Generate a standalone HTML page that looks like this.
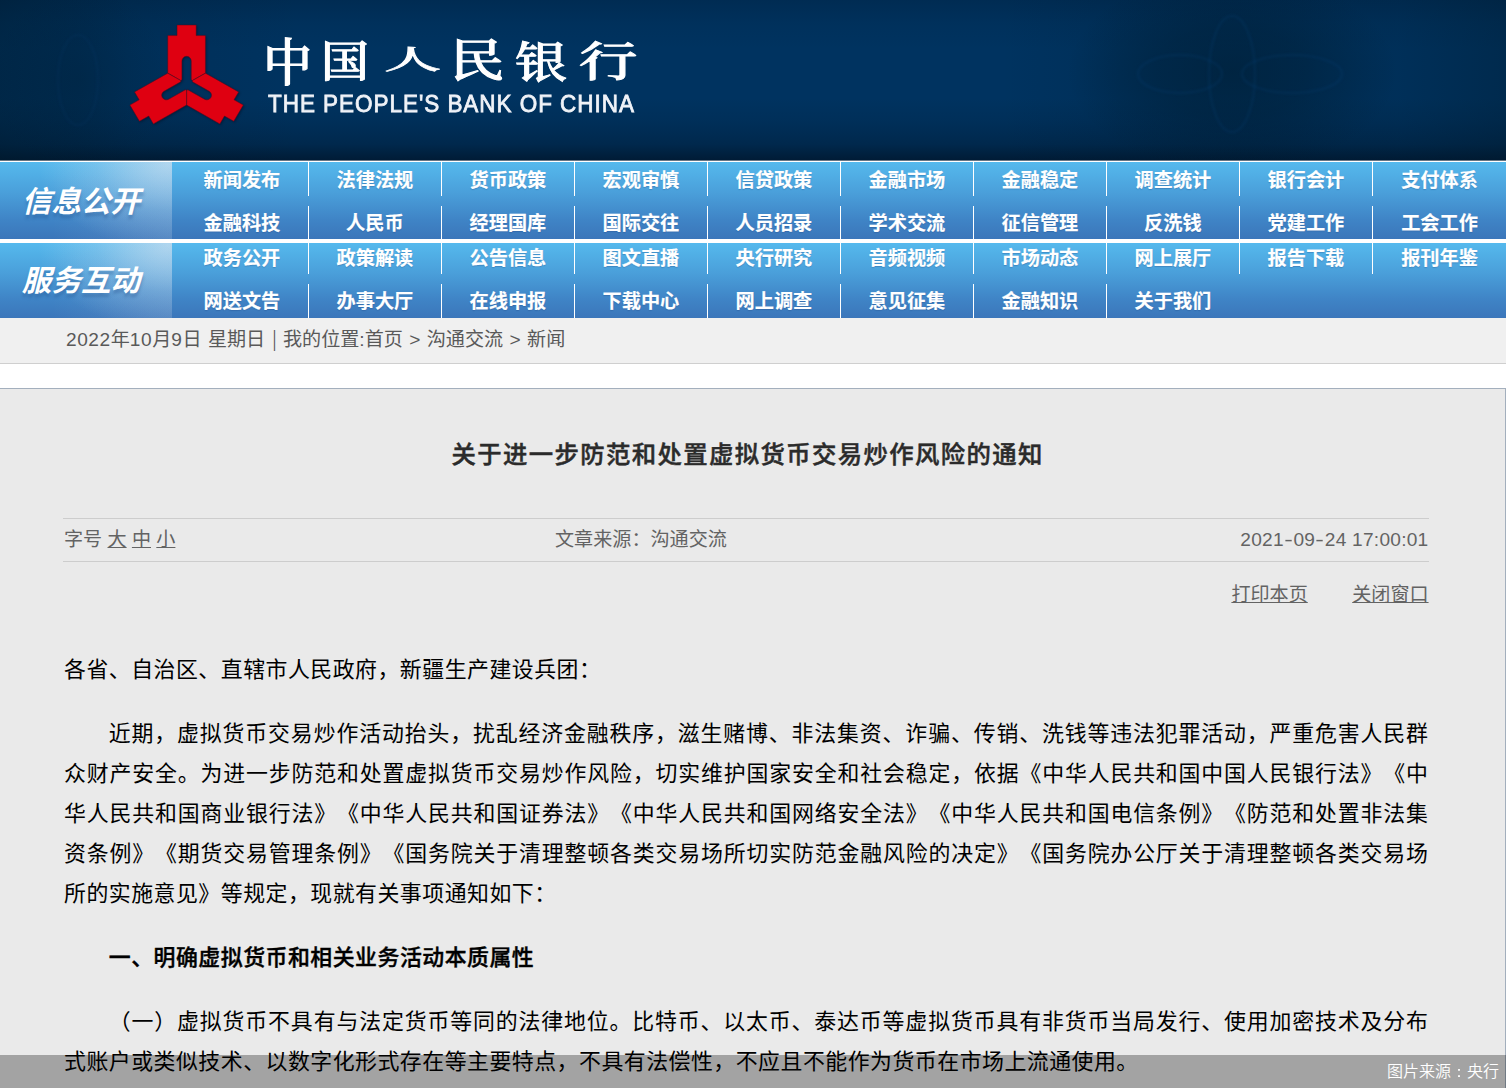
<!DOCTYPE html>
<html lang="zh-CN">
<head>
<meta charset="utf-8">
<title>关于进一步防范和处置虚拟货币交易炒作风险的通知</title>
<style>
*{margin:0;padding:0;box-sizing:border-box;text-spacing-trim:space-all}
html,body{width:1506px;height:1088px;overflow:hidden;background:#fff}
body{position:relative;font-family:"Liberation Sans","Noto Sans CJK SC",sans-serif;color:#000}
a{color:inherit;text-decoration:none}
.abs{position:absolute}
/* header */
#hd{position:absolute;left:0;top:0;width:1506px;height:161px;background:#003360;overflow:hidden}
#hd:after{content:"";position:absolute;left:0;top:160px;width:100%;height:1px;background:rgba(255,255,255,.4)}
#hd .g1{position:absolute;inset:0;background:
 radial-gradient(ellipse 165px 100px at 1232px 72px, rgba(0,22,36,.45) 0%, rgba(0,22,36,.32) 45%, rgba(0,22,36,0) 100%),
 radial-gradient(ellipse 90px 95px at 80px 80px, rgba(0,22,36,.2) 0%, rgba(0,22,36,0) 100%),
 linear-gradient(to right, rgba(0,22,36,.4) 0px, rgba(0,22,36,.13) 130px, rgba(0,22,36,0) 300px, rgba(0,22,36,0) 1000px, rgba(0,22,36,.1) 1120px, rgba(0,22,36,.12) 1400px, rgba(0,22,36,.3) 1506px),
 linear-gradient(to bottom, rgba(0,14,30,.2) 0px, rgba(0,14,30,.06) 25px, rgba(0,0,0,0) 50px, rgba(0,0,0,0) 98px, rgba(0,12,26,.1) 122px, rgba(0,12,26,.27) 144px, rgba(0,12,26,.62) 161px)}
#logo{position:absolute;left:0;top:0;width:1506px;height:161px}
#cn{position:absolute;left:0;top:0;width:700px;height:120px;color:#fff;font-family:"Liberation Serif","Noto Serif CJK SC",serif;font-weight:500;font-size:44px;line-height:44px;white-space:nowrap;filter:blur(.5px)}
#cn span{position:absolute;transform-origin:0 0;-webkit-text-stroke:1px #fff}
#en{position:absolute;left:268px;top:89.2px;color:#f0f3f8;font-family:"Liberation Sans",sans-serif;font-size:24.2px;line-height:30px;white-space:nowrap;letter-spacing:1.04px;-webkit-text-stroke:.8px #f0f3f8;filter:blur(.5px);transform:scaleX(.93);transform-origin:0 0}
/* nav */
.nav{position:absolute;left:0;width:1506px;background:linear-gradient(to bottom,#55b9ed 0%,#4a9fda 40%,#3f84c6 75%,#3b76ba 100%)}
#nav1{top:162px;height:77px}
#nav2{top:243px;height:75px}
.lab{position:absolute;left:0;top:0;width:172px;height:100%;background:linear-gradient(to right,rgba(225,230,240,0) 30%,rgba(225,230,240,.13) 100%),radial-gradient(ellipse 130px 85px at 168px 2px,rgba(225,230,240,.6) 0%,rgba(225,230,240,.42) 25%,rgba(225,230,240,.2) 55%,rgba(225,230,240,0) 100%)}
.lab span{position:absolute;left:-5px;width:172px;text-shadow:0 4px 3px rgba(30,70,130,.3);text-align:center;color:#fff;font-weight:bold;font-style:italic;font-size:29.6px;line-height:40px;white-space:nowrap}
.it{position:absolute;width:133px;text-align:center;color:#fff;font-weight:bold;font-size:19.2px;-webkit-text-stroke:.15px #fff;white-space:nowrap;text-shadow:0 1px 1px rgba(30,70,130,.3)}
.dv{position:absolute;width:1px;background:#fff}
/* breadcrumb */
#bc{position:absolute;left:0;top:318px;width:1506px;height:46px;background:#f0f0f0;border-bottom:1px solid #cfcfcf}
#bc p{position:absolute;left:66px;top:7.6px;font-size:19.1px;line-height:28px;color:#595959;white-space:nowrap;word-spacing:1.1px}
#bc b{font-weight:normal;letter-spacing:.55px}
#bc i{font-style:normal;display:inline-block;transform:scale(.7,1.13) translateY(-1px)}
/* article */
#art{position:absolute;left:-1px;top:388px;width:1507px;height:720px;background:#eaeaea;border:1px solid #a3afbd}
#ttl{position:absolute;left:1.6px;top:437px;width:1492px;text-align:center;font-weight:500;-webkit-text-stroke:.45px #2b2b2b;font-size:24.4px;letter-spacing:1.36px;line-height:36px;color:#2b2b2b;white-space:nowrap}
.hr{position:absolute;left:63px;width:1366px;height:1px;background:#cdcdcd}
.meta{position:absolute;font-size:19.1px;line-height:28px;color:#636363;white-space:nowrap;margin-top:.7px}
.meta b{display:inline-block;font-weight:normal;width:9.6px;text-align:center;transform:scaleX(1.35)}
.meta u{text-decoration:underline;text-underline-offset:.8px;text-decoration-thickness:1px}
.ln{position:absolute;left:64px;width:1364.5px;font-size:21.9px;letter-spacing:.5px;line-height:40px;height:40px;white-space:nowrap;text-align:justify;text-align-last:justify;color:#000}
.ln.l{text-align:left;text-align-last:left}
.ln.i{left:108.8px;width:1319.7px}
.ln.b{font-weight:500;-webkit-text-stroke:.4px #000}
#cap{position:absolute;left:0;top:1055px;width:1506px;height:33px;background:rgba(0,0,0,.3)}
#cap span{position:absolute;right:7px;top:3px;color:#fff;font-weight:350;font-size:16px;line-height:28px;white-space:nowrap}
#cap i{font-style:normal;font-family:"Liberation Sans","WenQuanYi Zen Hei",sans-serif}
</style>
</head>
<body>
<div id="hd">
  <div class="g1"></div>
  <svg id="logo" width="1506" height="161" viewBox="0 0 1506 161">
    <g transform="translate(186.6,83.8) scale(0.975,0.955)" fill="#df0011" stroke="#5a0a1e" stroke-width="0.5" style="filter:blur(.45px) drop-shadow(1px 1px 1px rgba(0,10,30,.45))">
      <path d="M-9.8,-61.5 H9.8 V-50.5 H19.3 V-11.2 L6,-3.5 L4.8,-4.2 V-24 A4.8,4.8 0 0 0 -4.8,-24 V-4.2 L-6,-3.5 L-19.3,-11.2 V-50.5 H-9.8 Z"/>
      <path transform="rotate(120)" d="M-9.8,-61.5 H9.8 V-50.5 H19.3 V-11.2 L6,-3.5 L4.8,-4.2 V-24 A4.8,4.8 0 0 0 -4.8,-24 V-4.2 L-6,-3.5 L-19.3,-11.2 V-50.5 H-9.8 Z"/>
      <path transform="rotate(240)" d="M-9.8,-61.5 H9.8 V-50.5 H19.3 V-11.2 L6,-3.5 L4.8,-4.2 V-24 A4.8,4.8 0 0 0 -4.8,-24 V-4.2 L-6,-3.5 L-19.3,-11.2 V-50.5 H-9.8 Z"/>
    </g>
  </svg>
  <svg class="abs" style="left:0;top:0;filter:blur(1.2px)" width="1506" height="161" viewBox="0 0 1506 161" fill="none" stroke="#0a4a8c" stroke-opacity=".13" stroke-width="3">
    <ellipse cx="1232" cy="74" rx="23" ry="58"/><ellipse cx="1180" cy="74" rx="42" ry="19"/><ellipse cx="1292" cy="74" rx="50" ry="19"/>
    <ellipse cx="78" cy="80" rx="20" ry="45" stroke-opacity=".08"/>
  </svg>
  <div id="cn"><span style="left:262.5px;top:39.7px;transform:scale(1.118,1.151)">中</span><span style="left:321.2px;top:41.1px;transform:scale(1.090,0.991)">国</span><span style="left:383.8px;top:48.0px;transform:scale(1.299,0.595)">人</span><span style="left:450.1px;top:40.0px;transform:scale(1.238,1.037)">民</span><span style="left:514.6px;top:42.0px;transform:scale(1.183,0.987)">银</span><span style="left:579.4px;top:41.9px;transform:scale(1.328,0.942)">行</span></div>
  <div id="en">THE PEOPLE'S BANK OF CHINA</div>
</div>
<div class="nav" id="nav1"><div class="lab"><span style="top:20px">信息公开</span></div></div>
<div class="nav" id="nav2"><div class="lab"><span style="top:17.5px">服务互动</span></div></div>
<div id="navitems">
<a class="it" style="left:175.4px;top:166.8px;line-height:28px">新闻发布</a>
<a class="it" style="left:308.4px;top:166.8px;line-height:28px">法律法规</a>
<a class="it" style="left:441.4px;top:166.8px;line-height:28px">货币政策</a>
<a class="it" style="left:574.4px;top:166.8px;line-height:28px">宏观审慎</a>
<a class="it" style="left:707.4px;top:166.8px;line-height:28px">信贷政策</a>
<a class="it" style="left:840.4px;top:166.8px;line-height:28px">金融市场</a>
<a class="it" style="left:973.4px;top:166.8px;line-height:28px">金融稳定</a>
<a class="it" style="left:1106.4px;top:166.8px;line-height:28px">调查统计</a>
<a class="it" style="left:1239.4px;top:166.8px;line-height:28px">银行会计</a>
<a class="it" style="left:1373.0px;top:166.8px;line-height:28px">支付体系</a>
<a class="it" style="left:175.4px;top:209.8px;line-height:28px">金融科技</a>
<a class="it" style="left:308.4px;top:209.8px;line-height:28px">人民币</a>
<a class="it" style="left:441.4px;top:209.8px;line-height:28px">经理国库</a>
<a class="it" style="left:574.4px;top:209.8px;line-height:28px">国际交往</a>
<a class="it" style="left:707.4px;top:209.8px;line-height:28px">人员招录</a>
<a class="it" style="left:840.4px;top:209.8px;line-height:28px">学术交流</a>
<a class="it" style="left:973.4px;top:209.8px;line-height:28px">征信管理</a>
<a class="it" style="left:1106.4px;top:209.8px;line-height:28px">反洗钱</a>
<a class="it" style="left:1239.4px;top:209.8px;line-height:28px">党建工作</a>
<a class="it" style="left:1373.0px;top:209.8px;line-height:28px">工会工作</a>
<a class="it" style="left:175.4px;top:244.8px;line-height:28px">政务公开</a>
<a class="it" style="left:308.4px;top:244.8px;line-height:28px">政策解读</a>
<a class="it" style="left:441.4px;top:244.8px;line-height:28px">公告信息</a>
<a class="it" style="left:574.4px;top:244.8px;line-height:28px">图文直播</a>
<a class="it" style="left:707.4px;top:244.8px;line-height:28px">央行研究</a>
<a class="it" style="left:840.4px;top:244.8px;line-height:28px">音频视频</a>
<a class="it" style="left:973.4px;top:244.8px;line-height:28px">市场动态</a>
<a class="it" style="left:1106.4px;top:244.8px;line-height:28px">网上展厅</a>
<a class="it" style="left:1239.4px;top:244.8px;line-height:28px">报告下载</a>
<a class="it" style="left:1373.0px;top:244.8px;line-height:28px">报刊年鉴</a>
<a class="it" style="left:175.4px;top:287.8px;line-height:28px">网送文告</a>
<a class="it" style="left:308.4px;top:287.8px;line-height:28px">办事大厅</a>
<a class="it" style="left:441.4px;top:287.8px;line-height:28px">在线申报</a>
<a class="it" style="left:574.4px;top:287.8px;line-height:28px">下载中心</a>
<a class="it" style="left:707.4px;top:287.8px;line-height:28px">网上调查</a>
<a class="it" style="left:840.4px;top:287.8px;line-height:28px">意见征集</a>
<a class="it" style="left:973.4px;top:287.8px;line-height:28px">金融知识</a>
<a class="it" style="left:1106.4px;top:287.8px;line-height:28px">关于我们</a>
<i class="dv" style="left:308px;top:162px;height:34px"></i>
<i class="dv" style="left:441px;top:162px;height:34px"></i>
<i class="dv" style="left:574px;top:162px;height:34px"></i>
<i class="dv" style="left:707px;top:162px;height:34px"></i>
<i class="dv" style="left:840px;top:162px;height:34px"></i>
<i class="dv" style="left:973px;top:162px;height:34px"></i>
<i class="dv" style="left:1106px;top:162px;height:34px"></i>
<i class="dv" style="left:1239px;top:162px;height:34px"></i>
<i class="dv" style="left:1372px;top:162px;height:34px"></i>
<i class="dv" style="left:308px;top:206px;height:33px"></i>
<i class="dv" style="left:441px;top:206px;height:33px"></i>
<i class="dv" style="left:574px;top:206px;height:33px"></i>
<i class="dv" style="left:707px;top:206px;height:33px"></i>
<i class="dv" style="left:840px;top:206px;height:33px"></i>
<i class="dv" style="left:973px;top:206px;height:33px"></i>
<i class="dv" style="left:1106px;top:206px;height:33px"></i>
<i class="dv" style="left:1239px;top:206px;height:33px"></i>
<i class="dv" style="left:1372px;top:206px;height:33px"></i>
<i class="dv" style="left:308px;top:243px;height:31px"></i>
<i class="dv" style="left:441px;top:243px;height:31px"></i>
<i class="dv" style="left:574px;top:243px;height:31px"></i>
<i class="dv" style="left:707px;top:243px;height:31px"></i>
<i class="dv" style="left:840px;top:243px;height:31px"></i>
<i class="dv" style="left:973px;top:243px;height:31px"></i>
<i class="dv" style="left:1106px;top:243px;height:31px"></i>
<i class="dv" style="left:1239px;top:243px;height:31px"></i>
<i class="dv" style="left:1372px;top:243px;height:31px"></i>
<i class="dv" style="left:308px;top:284px;height:34px"></i>
<i class="dv" style="left:441px;top:284px;height:34px"></i>
<i class="dv" style="left:574px;top:284px;height:34px"></i>
<i class="dv" style="left:707px;top:284px;height:34px"></i>
<i class="dv" style="left:840px;top:284px;height:34px"></i>
<i class="dv" style="left:973px;top:284px;height:34px"></i>
<i class="dv" style="left:1106px;top:284px;height:34px"></i>
</div>
<div id="bc"><p><b>2022</b>年<b>10</b>月<b>9</b>日 星期日 <i>|</i> 我的位置:首页 &gt; 沟通交流 &gt; 新闻</p></div>
<div id="art"></div>
<div id="ttl">关于进一步防范和处置虚拟货币交易炒作风险的通知</div>
<div class="hr" style="top:518px"></div>
<div class="hr" style="top:561px"></div>
<div class="meta" style="left:64px;top:525px">字号 <u>大</u> <u>中</u> <u>小</u></div>
<div class="meta" style="left:555px;top:525px">文章来源：沟通交流</div>
<div class="meta" style="right:77.5px;top:525px;letter-spacing:.26px">2021<b>-</b>09<b>-</b>24 17:00:01</div>
<div class="meta" style="left:1231.4px;top:580px"><u>打印本页</u></div>
<div class="meta" style="left:1352.2px;top:580px"><u>关闭窗口</u></div>
<div class="ln l" style="top:649.7px">各省、自治区、直辖市人民政府，新疆生产建设兵团：</div>
<div class="ln i" style="top:713.5px">近期，虚拟货币交易炒作活动抬头，扰乱经济金融秩序，滋生赌博、非法集资、诈骗、传销、洗钱等违法犯罪活动，严重危害人民群</div>
<div class="ln" style="top:753.5px">众财产安全。为进一步防范和处置虚拟货币交易炒作风险，切实维护国家安全和社会稳定，依据《中华人民共和国中国人民银行法》《中</div>
<div class="ln" style="top:793.5px">华人民共和国商业银行法》《中华人民共和国证券法》《中华人民共和国网络安全法》《中华人民共和国电信条例》《防范和处置非法集</div>
<div class="ln" style="top:833.5px">资条例》《期货交易管理条例》《国务院关于清理整顿各类交易场所切实防范金融风险的决定》《国务院办公厅关于清理整顿各类交易场</div>
<div class="ln l" style="top:873.5px">所的实施意见》等规定，现就有关事项通知如下：</div>
<div class="ln l i b" style="top:938.1px">一、明确虚拟货币和相关业务活动本质属性</div>
<div class="ln i" style="top:1001.9px">（一）虚拟货币不具有与法定货币等同的法律地位。比特币、以太币、泰达币等虚拟货币具有非货币当局发行、使用加密技术及分布</div>
<div class="ln l" style="top:1041.7px">式账户或类似技术、以数字化形式存在等主要特点，不具有法偿性，不应且不能作为货币在市场上流通使用。</div>
<div id="cap"><span>图片来源<i>：</i>央行</span></div>
</body>
</html>
